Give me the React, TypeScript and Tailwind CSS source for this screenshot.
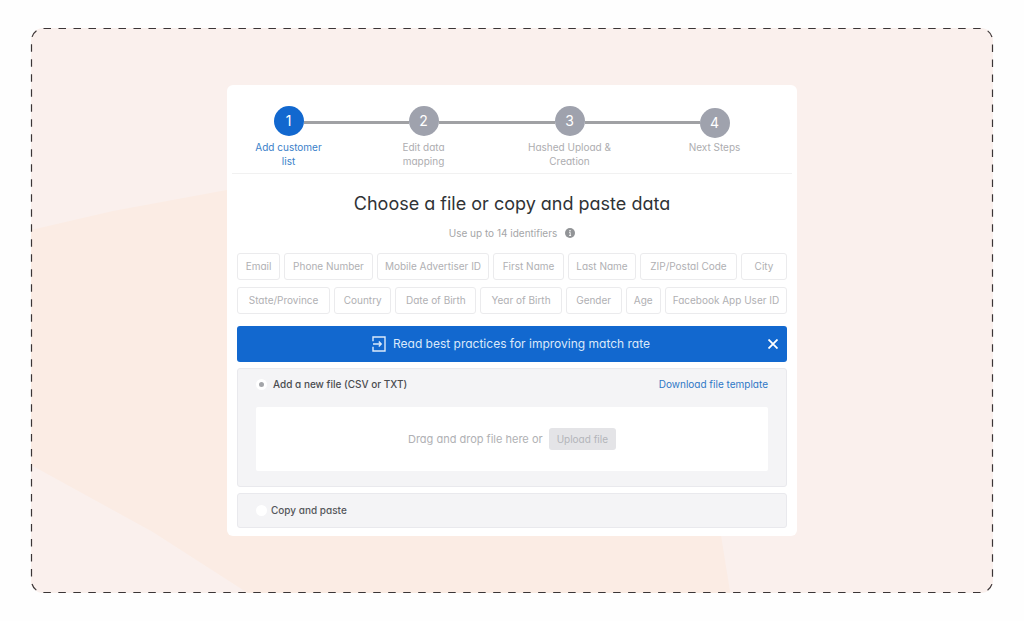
import { useState } from 'react';
import clsx from 'clsx';

const steps = [
  { label: ['Add customer', 'list'] },
  { label: ['Edit data', 'mapping'] },
  { label: ['Hashed Upload &', 'Creation'] },
  { label: ['Next Steps'] },
];

const identifierRows = [
  [
    { name: 'Email', size: 'basis-[43px]' },
    { name: 'Phone Number', size: 'basis-[89px]' },
    { name: 'Mobile Advertiser ID', size: 'basis-[112px]' },
    { name: 'First Name', size: 'basis-[71px]' },
    { name: 'Last Name', size: 'basis-[68px]' },
    { name: 'ZIP/Postal Code', size: 'basis-[97px]' },
    { name: 'City', size: 'basis-[46px]' },
  ],
  [
    { name: 'State/Province', size: 'basis-[93px]' },
    { name: 'Country', size: 'basis-[57px]' },
    { name: 'Date of Birth', size: 'basis-[81px]' },
    { name: 'Year of Birth', size: 'basis-[81px]' },
    { name: 'Gender', size: 'basis-[56px]' },
    { name: 'Age', size: 'basis-[35px]' },
    { name: 'Facebook App User ID', size: 'basis-[122px]' },
  ],
];

const radioClass =
  'size-[11px] appearance-none rounded-full border-[3px] border-white bg-white checked:bg-[#a3a5a9] outline-none focus-visible:ring-1 ring-blue-500';

function Backdrop() {
  return (
    <>
      <svg
        className="absolute inset-0 h-full w-full rounded-xl"
        viewBox="0 0 963 565"
        preserveAspectRatio="none"
        aria-hidden="true"
      >
        <path d="M0 202 L82 183 L196 162 L560 150 Q660 330 691 509 L700 565 H217 L122 504 L0 437 Z" fill="#fbece4" />
      </svg>
      <svg className="absolute inset-0 h-full w-full overflow-visible" aria-hidden="true">
        <rect
          x="0.5"
          y="0.5"
          rx="12"
          className="h-[calc(100%-1px)] w-[calc(100%-1px)]"
          fill="none"
          stroke="#3b3536"
          strokeWidth="1.2"
          pathLength={3030}
          strokeDasharray="7.5 7.5"
        />
      </svg>
    </>
  );
}

function Stepper() {
  return (
    <ol className="mx-[5px] grid grid-cols-[113fr_157fr_135fr_155fr] border-b border-[#f1f1f1] pt-[21px] pb-[5px]">
      {steps.map((step, i) => {
        const last = i === steps.length - 1;
        return (
          <li key={i} className="flex flex-col">
            <div className="flex h-8 items-center">
              <span className={clsx('h-[3px] flex-1', i > 0 && 'bg-[#a0a1a4]')} />
              <span
                className={clsx(
                  'flex size-[30px] items-center justify-center rounded-full text-sm text-white',
                  i === 0 ? 'bg-[#1268cf]' : 'bg-[#9fa2ad]',
                  last ? 'self-end' : 'self-start'
                )}
              >
                {i + 1}
              </span>
              <span className={clsx('h-[3px] flex-1', !last && 'bg-[#a0a1a4]')} />
            </div>
            <p
              className={clsx(
                'mt-[2px] h-7 text-center text-[10px] leading-[14px]',
                i === 0 ? 'text-[#3a7fc9]' : 'text-[#adadb0]'
              )}
            >
              {step.label.map(line => (
                <span key={line} className="block">{line}</span>
              ))}
            </p>
          </li>
        );
      })}
    </ol>
  );
}

export default function App() {
  const [source, setSource] = useState('file');
  const [showBanner, setShowBanner] = useState(true);

  return (
    <main className="flex min-h-screen bg-[#fefefe] px-[31px] py-7 font-['Inter',sans-serif] [font-feature-settings:'cv11']">
      <div className="relative flex flex-1 items-center justify-center rounded-xl bg-[#faf0ed]">
        <Backdrop />
        <section className="relative w-full max-w-[570px] rounded-md bg-white pb-2">
          <Stepper />

          <div className="px-[10px]">
            <h1 className="mt-[18px] text-center text-lg leading-6 text-[#303336]">
              Choose a file or copy and paste data
            </h1>
            <p className="mt-[10px] flex items-center justify-center gap-2 text-[10px] leading-[14px] text-[#a5a6a8]">
              Use up to 14 identifiers
              <svg className="size-[10px]" viewBox="0 0 10 10" aria-hidden="true">
                <circle cx="5" cy="5" r="5" fill="#929497" />
                <circle cx="5" cy="2.7" r="0.8" fill="#fff" />
                <path d="M4.2 4.4 H5.2 V7.4 M4.1 7.5 H6.1" stroke="#fff" strokeWidth="0.9" fill="none" />
              </svg>
            </p>

            <div className="mt-[13px] space-y-[7px]">
              {identifierRows.map((row, i) => (
                <ul key={i} className="flex gap-1">
                  {row.map(item => (
                    <li
                      key={item.name}
                      className={clsx(
                        'flex h-[27px] grow items-center justify-center rounded-[3px] border border-[#ebebed] text-[10px] whitespace-nowrap text-[#b0b0b3]',
                        item.size
                      )}
                    >
                      {item.name}
                    </li>
                  ))}
                </ul>
              ))}
            </div>

            {showBanner && (
              <div className="mt-3 flex h-9 items-center rounded-[3px] bg-[#1268cf] pr-2 pl-[18px] text-white">
                <a href="#best-practices" className="flex flex-1 items-center justify-center gap-[7px] text-xs text-[#dbe9fa]">
                  <svg className="h-4 w-[14px]" viewBox="0 0 14 16" fill="none" stroke="currentColor" strokeWidth="1.4" aria-hidden="true">
                    <path d="M1 5.3 V1 H13 V15 H1 V10.7" />
                    <path d="M1 8 H9 M6.8 5.6 L9.2 8 L6.8 10.4" />
                  </svg>
                  Read best practices for improving match rate
                </a>
                <button type="button" aria-label="Close" onClick={() => setShowBanner(false)} className="p-[1px]">
                  <svg className="size-[10px]" viewBox="0 0 10 10" stroke="currentColor" strokeWidth="1.8" aria-hidden="true">
                    <path d="M0.5 0.5 L9.5 9.5 M9.5 0.5 L0.5 9.5" />
                  </svg>
                </button>
              </div>
            )}

            <div className="mt-[6px] rounded-[3px] border border-[#e9e9ed] bg-[#f4f4f6] px-[18px] pb-[15px]">
              <div className="flex h-[31px] items-center justify-between text-[10px]">
                <label className="flex items-center gap-[6px] font-medium text-[#4a4c50]">
                  <input
                    type="radio"
                    name="source"
                    checked={source === 'file'}
                    onChange={() => setSource('file')}
                    className={radioClass}
                  />
                  Add a new file (CSV or TXT)
                </label>
                <a href="#template" className="text-[#2f78c6]">Download file template</a>
              </div>
              <div className="mt-[7px] flex h-16 items-center justify-center gap-[6px] rounded-[2px] bg-white text-[11px] text-[#b0b1b4]">
                Drag and drop file here or
                <button type="button" className="h-[22px] rounded-[3px] bg-[#e4e4e7] px-2 text-[10px] text-[#b3b5ba]">
                  Upload file
                </button>
              </div>
            </div>

            <div className="mt-[6px] flex h-[35px] items-center rounded-[3px] border border-[#e9e9ed] bg-[#f4f4f6] px-[18px]">
              <label className="flex items-center gap-1 text-[10px] font-medium text-[#55575b]">
                <input
                  type="radio"
                  name="source"
                  checked={source === 'paste'}
                  onChange={() => setSource('paste')}
                  className={radioClass}
                />
                Copy and paste
              </label>
            </div>
          </div>
        </section>
      </div>
    </main>
  );
}
